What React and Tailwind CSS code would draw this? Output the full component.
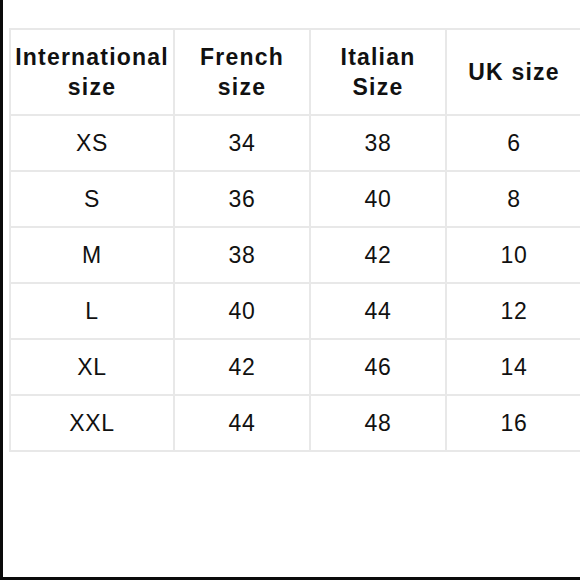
export default function App() {
  const rows = [
    ["XS", "34", "38", "6"],
    ["S", "36", "40", "8"],
    ["M", "38", "42", "10"],
    ["L", "40", "44", "12"],
    ["XL", "42", "46", "14"],
    ["XXL", "44", "48", "16"],
  ];
  const headers = [
    ["International", "size"],
    ["French", "size"],
    ["Italian", "Size"],
    ["UK size"],
  ];
  return (
    <div
      className="w-[580px] h-[580px] overflow-hidden bg-white"
      style={{ fontFamily: '"Liberation Sans", Arial, sans-serif' }}
    >
      <div className="w-[580px] h-[580px] border-l-[3px] border-b-[3px] border-[#0a0a0a] overflow-hidden pt-[28px] pl-[6px]">
        <div className="w-[574px] grid grid-cols-[162px_134px_134px_134px] gap-[2px] bg-[#e8e8e8] p-[2px] text-[#111]">
          {headers.map((h, i) => (
            <div
              key={i}
              className="bg-white h-[84px] flex flex-col items-center justify-center font-bold text-[23px] leading-[30px] tracking-[1.2px] text-center"
            >
              {h.map((l, j) => (
                <span key={j}>{l}</span>
              ))}
            </div>
          ))}
          {rows.map((r, i) =>
            r.map((c, j) => (
              <div
                key={i + "-" + j}
                className="bg-white h-[54px] flex items-center justify-center text-[23px] tracking-[0.6px]"
              >
                {c}
              </div>
            ))
          )}
        </div>
      </div>
    </div>
  );
}
